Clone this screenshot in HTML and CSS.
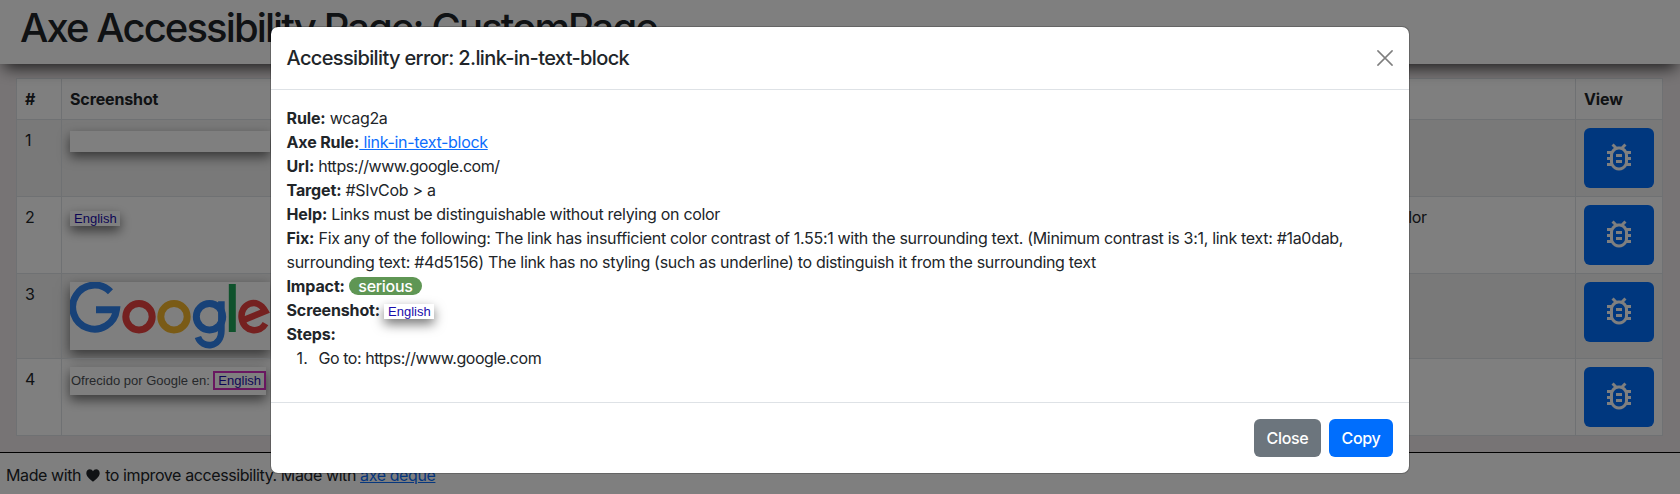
FILE: index.html
```html
<!DOCTYPE html>
<html lang="en">
<head>
<meta charset="utf-8">
<title>Axe Accessibility Page: CustomPage</title>
<link rel="stylesheet" href="styles.css">
</head>
<body>
<svg class="defs" aria-hidden="true">
  <symbol id="bug" viewBox="0 0 24 24"><path d="M20 8h-2.81c-.45-.78-1.07-1.45-1.82-1.96L17 4.41 15.59 3l-2.17 2.17C12.96 5.06 12.49 5 12 5s-.96.06-1.41.17L8.41 3 7 4.41l1.62 1.63C7.88 6.55 7.26 7.22 6.81 8H4v2h2.09c-.05.33-.09.66-.09 1v1H4v2h2v1c0 .34.04.67.09 1H4v2h2.81c1.04 1.79 2.97 3 5.19 3s4.15-1.21 5.19-3H20v-2h-2.09c.05-.33.09-.66.09-1v-1h2v-2h-2v-1c0-.34-.04-.67-.09-1H20V8zm-4 4v3c0 .22-.03.47-.07.7l-.1.65-.37.65c-.72 1.24-2.04 2-3.46 2s-2.74-.77-3.46-2l-.37-.64-.1-.65C8.03 15.48 8 15.23 8 15v-4c0-.23.03-.48.07-.7l.1-.65.37-.65c.3-.52.72-.97 1.21-1.31l.57-.39.74-.18c.31-.08.63-.12.94-.12.32 0 .63.04.95.12l.68.16.61.42c.5.34.91.78 1.21 1.31l.38.65.1.65c.04.22.07.47.07.69v1zm-6 2h4v2h-4zm0-4h4v2h-4z"/></symbol>
</svg>
<header class="page-header"><h1 class="page-title">Axe Accessibility Page: CustomPage</h1></header>
<main class="content">
  <table class="table">
    <colgroup><col class="col-num"><col class="col-shot"><col class="col-help"><col class="col-view"></colgroup>
    <thead><tr><th>#</th><th>Screenshot</th><th></th><th>View</th></tr></thead>
    <tbody>
      <tr class="striped">
        <td>1</td>
        <td><div class="shot shot-input"></div></td>
        <td></td>
        <td><button class="btn-view" aria-label="View"><svg class="bug"><use href="#bug"/></svg></button></td>
      </tr>
      <tr>
        <td>2</td>
        <td><div class="shot shot-link shot-cell">English</div></td>
        <td>Links must be distinguishable without relying on color</td>
        <td><button class="btn-view" aria-label="View"><svg class="bug"><use href="#bug"/></svg></button></td>
      </tr>
      <tr class="striped">
        <td>3</td>
        <td><div class="shot shot-logo">
          <svg class="logo" viewBox="0 0 200 68" fill="none">
            <path class="blue" d="M40.500 9.800A22 22 0 1 0 46.500 27.700H26" stroke-width="7"/>
            <circle class="red" cx="69" cy="34.700" r="13.200" stroke-width="7"/>
            <circle class="yellow" cx="104" cy="34.700" r="13.200" stroke-width="7"/>
            <path class="blue" d="M151.400 19.200V48.500C151.400 66.500 132 67 127.900 55" stroke-width="6.600"/>
            <circle class="blue" cx="139.500" cy="34.700" r="13.200" stroke-width="7"/>
            <path class="green" d="M162.300 2V50" stroke-width="7"/>
            <path class="red" d="M172.500 38.600L195.300 29.200C187 14 169.500 22 171.700 36.500C174 50.500 190 51.500 195.500 41.700" stroke-width="6.500"/>
          </svg>
        </div></td>
        <td></td>
        <td><button class="btn-view" aria-label="View"><svg class="bug"><use href="#bug"/></svg></button></td>
      </tr>
      <tr>
        <td>4</td>
        <td><div class="shot shot-offered"><span>Ofrecido por Google en:</span><span class="marked">English</span></div></td>
        <td></td>
        <td><button class="btn-view" aria-label="View"><svg class="bug"><use href="#bug"/></svg></button></td>
      </tr>
    </tbody>
  </table>
</main>
<footer class="page-footer"><span>Made with</span><svg class="heart" viewBox="0 0 14 13"><path d="M7 12.800C5 10.700.3 8 .3 4.200.3 1.800 2 .3 3.800.3 5.300.3 6.400 1.100 7 2.300 7.600 1.100 8.700.3 10.200.3 12 .3 13.700 1.800 13.700 4.200 13.700 8 9 10.700 7 12.800Z"/></svg><span>to improve accessibility. Made with <a href="#" class="link">axe deque</a></span></footer>

<div class="backdrop">
  <section class="modal" role="dialog" aria-modal="true">
    <div class="modal-header">
      <h5 class="modal-title">Accessibility error: 2.link-in-text-block</h5>
      <button class="btn-close" aria-label="Close"><svg class="close-icon" viewBox="0 0 16 16"><path d="M.9.9 15.100 15.100M15.100.9.9 15.100"/></svg></button>
    </div>
    <div class="modal-body">
      <div><b>Rule:</b> wcag2a</div>
      <div><b>Axe Rule:</b><a href="#" class="link"> link-in-text-block</a></div>
      <div class="address"><b>Url:</b> https://www.google.com/</div>
      <div><b>Target:</b> #SIvCob &gt; a</div>
      <div><b>Help:</b> Links must be distinguishable without relying on color</div>
      <div class="fix"><b>Fix:</b> Fix any of the following: The link has insufficient color contrast of 1.55:1 with the surrounding text. (Minimum contrast is 3:1, link text: #1a0dab,<br>surrounding text: #4d5156) The link has no styling (such as underline) to distinguish it from the surrounding text</div>
      <div class="line"><b>Impact:</b><span class="badge">serious</span></div>
      <div class="line"><b>Screenshot:</b><span class="shot shot-link shot-inline">English</span></div>
      <div><b>Steps:</b></div>
      <div class="steps"><span class="step-number">1.</span><span class="address">Go to: https://www.google.com</span></div>
    </div>
    <div class="modal-footer">
      <button class="btn btn-secondary">Close</button>
      <button class="btn btn-primary">Copy</button>
    </div>
  </section>
</div>
</body>
</html>
```
FILE: styles.css
```css
* { box-sizing: border-box; }
body {
  margin: 0;
  height: 494px;
  overflow: hidden;
  background: #efe9eb;
  color: #212529;
  font: 400 16px/24px Inter, sans-serif;
  letter-spacing: -0.31px;
}
b, th { font-weight: 700; letter-spacing: -0.13px; }
.defs { display: none; }
.link { color: #0d6efd; text-decoration: underline; }

.page-header {
  position: relative;
  height: 64px;
  padding: 4px 20px 0;
  background: #fff;
  box-shadow: 0 8px 15px -4px rgba(0, 0, 0, .75);
}
.page-title { margin: 0; font-size: 40px; line-height: 48px; font-weight: 500; letter-spacing: -1.9px; white-space: nowrap; }

.content { padding: 14px 17px 0 16px; height: 388px; }
.table { width: 1647px; border-collapse: collapse; table-layout: fixed; background: #fff; }
.table th, .table td { padding: 8px; border: 1px solid #dee2e6; text-align: left; vertical-align: top; }
.table td { height: 77px; }
.col-num { width: 45px; }
.col-shot { width: 968px; }
.col-view { width: 87px; }
.striped { background: #f2f2f2; }

.btn-view {
  display: flex;
  align-items: center;
  justify-content: center;
  width: 70px;
  height: 60px;
  padding: 0 0 2px;
  border: 0;
  border-radius: 6px;
  background: #006efd;
}
.bug { width: 36px; height: 36px; fill: #fff; }

.shot { background: #fff; box-shadow: 0 5px 12px rgba(0, 0, 0, .55); font-family: "Liberation Sans", Arial, sans-serif; font-size: 13px; letter-spacing: 0; }
.shot-input { width: 200px; height: 21px; margin-top: 3px; }
.shot-link { width: 50px; height: 15px; padding-left: 4px; line-height: 15px; color: #1a0dab; }
.shot-cell { margin-top: 6px; }
.shot-logo { width: 200px; height: 68px; }
.logo { display: block; width: 200px; height: 68px; }
.blue { stroke: #3184f0; }
.red { stroke: #ea4240; }
.yellow { stroke: #f5b62c; }
.green { stroke: #1fa558; }
.shot-offered { display: flex; align-items: center; justify-content: space-between; width: 196px; height: 28px; padding: 0 0 1px 1px; color: #4d5156; line-height: 15px; }
.marked { height: 19px; padding: 0 3px; border: 2px solid #d32fc0; color: #1a0dab; }

.page-footer { display: flex; align-items: center; height: 42px; padding: 3px 6px 0; border-top: 1px solid #000; background: #fff; letter-spacing: -0.4px; }
.heart { width: 14px; height: 13px; margin: 0 5px; fill: #212529; }

.backdrop { position: absolute; inset: 0; padding-top: 26px; background: rgba(0, 0, 0, .5); }
.modal { width: 1140px; height: 448px; margin: 0 auto; border: 1px solid rgba(0, 0, 0, .2); border-radius: 8px; background: #fff; background-clip: padding-box; }
.modal-header { display: flex; align-items: center; justify-content: space-between; height: 63px; padding: 0 16px 0 15.5px; border-bottom: 1px solid #dee2e6; }
.modal-title { margin: 0; font-size: 20px; line-height: 30px; font-weight: 500; letter-spacing: -0.64px; }
.btn-close { display: flex; padding: 0; border: 0; background: none; opacity: .5; }
.close-icon { width: 16px; height: 16px; fill: none; stroke: #000; stroke-width: 1.5; stroke-linecap: round; }
.modal-body { padding: 16px 15.5px; height: 312px; }
.fix { white-space: nowrap; }
.address { letter-spacing: -0.45px; }
.line { display: flex; align-items: center; height: 24px; }
.badge { height: 18px; margin-left: 4px; padding: 0 9.5px; border-radius: 9px; background: #5f9654; color: #fff; font-weight: 500; line-height: 18px; }
.shot-inline { margin: 3px 0 0 4px; }
.steps { display: flex; gap: 9px; padding-left: 10px; }
.step-number { width: 13px; letter-spacing: 0.3px; }
.modal-footer { display: flex; justify-content: flex-end; gap: 8px; padding: 16px; border-top: 1px solid #dee2e6; }
.btn { height: 38px; padding: 0; border: 0; border-radius: 6px; color: #fff; font: 500 16px/24px Inter, sans-serif; letter-spacing: -0.3px; }
.btn-secondary { width: 67px; background: #6c757d; }
.btn-primary { width: 64px; background: #006efd; }
```
